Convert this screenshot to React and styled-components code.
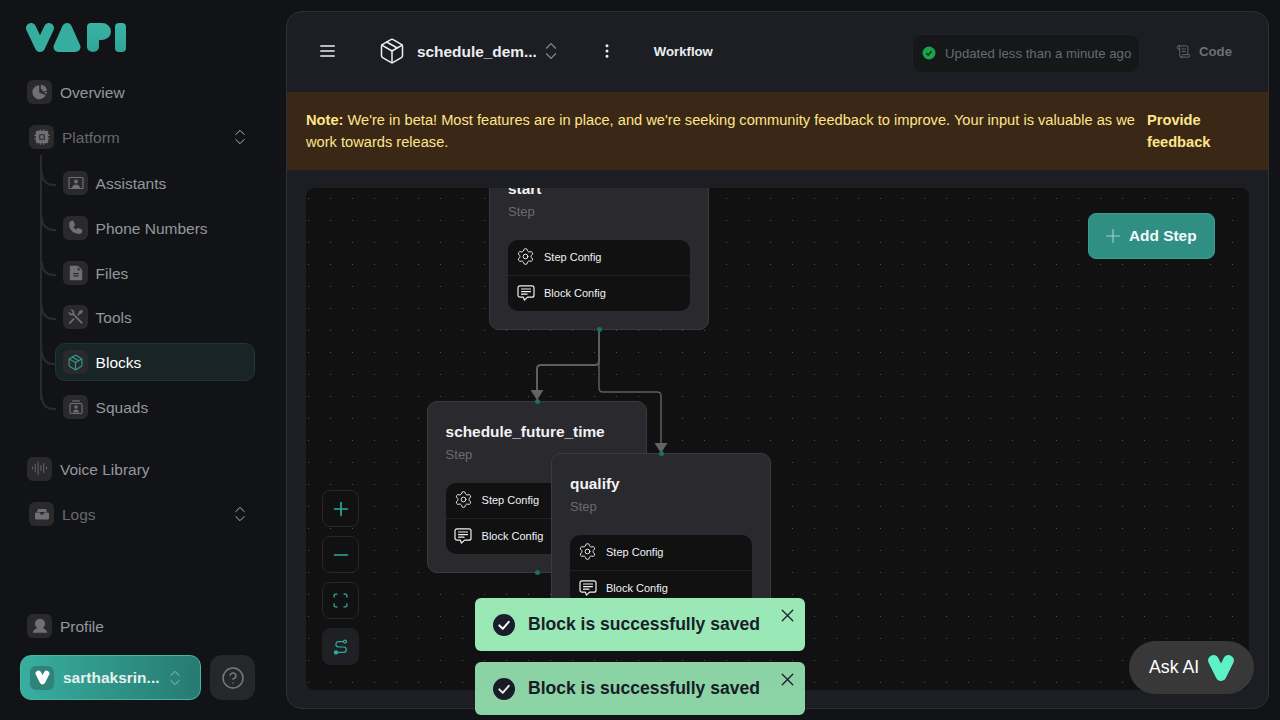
import React from 'react'
import styled, { createGlobalStyle } from 'styled-components'
import {
  AudioLines,
  ChevronsUpDown,
  CircleHelp,
  EllipsisVertical,
  Minus,
  Package,
  Plus,
  Scan,
  ScrollText,
  Settings,
  X,
} from 'lucide-react'
import {
  PiCpuFill,
  PiFileTextFill,
  PiPhoneFill,
  PiUserFill,
} from 'react-icons/pi'
import { RiToolsLine } from 'react-icons/ri'

const GlobalStyle = createGlobalStyle`
  html, body {
    margin: 0;
    height: 100%;
    overflow: hidden;
    background: #121317;
    font-family: "Liberation Sans", Arial, sans-serif;
  }
  * { box-sizing: border-box; }
`

const Page = styled.div`
  display: flex;
  height: 100vh;
`

const Sidebar = styled.aside`
  width: 286px;
  flex: none;
  display: flex;
  flex-direction: column;
  padding: 23px 0 20px;
`

const LogoMark = styled.svg`
  display: block;
  width: 101px;
  height: 30px;
  margin: 0 0 20px 26px;
`

const TopRow = styled.div`
  display: flex;
  align-items: center;
  gap: 8px;
  height: 38px;
  padding-left: ${(p) => (p.$group ? 29 : 27)}px;
  padding-right: 36px;
  margin-bottom: ${(p) => p.$after ?? 7}px;
  font-size: 15.5px;
  line-height: 20px;
  color: ${(p) => (p.$group ? '#67696e' : '#94979d')};
`

const RowLabel = styled.span`
  margin-top: 2px;
`

const IconBox = styled.span`
  width: 25px;
  height: 24px;
  flex: none;
  display: flex;
  align-items: center;
  justify-content: center;
  border-radius: 6px;
  background: #2a2a2c;
  color: ${(p) => (p.$active ? '#2f9c8e' : '#6f7074')};
`

const GroupChevron = styled.span`
  margin-left: auto;
  display: flex;
  color: #c4c4c6;
`

const ChildList = styled.div`
  position: relative;
  display: flex;
  flex-direction: column;
  gap: 6.8px;
  margin: 8px 0 24px;
  &::before {
    content: '';
    position: absolute;
    left: 40px;
    top: -9px;
    height: 245px;
    width: 2px;
    background: #2a2b2f;
  }
`

const ChildRow = styled.div`
  position: relative;
  display: flex;
  align-items: center;
  gap: 7.6px;
  height: 38px;
  width: 200px;
  margin-left: 55px;
  padding-left: 7px;
  border-radius: 10px;
  border: 1px solid ${(p) => (p.$active ? '#1f3835' : 'transparent')};
  background: ${(p) => (p.$active ? '#182425' : 'transparent')};
  font-size: 15.5px;
  line-height: 20px;
  color: ${(p) => (p.$active ? '#ffffff' : '#94979d')};
  &::before {
    content: '';
    position: absolute;
    left: -15px;
    top: 7px;
    width: 13px;
    height: 12px;
    border-left: 2px solid #2a2b2f;
    border-bottom: 2px solid #2a2b2f;
    border-bottom-left-radius: 12px;
  }
`

const SideFooter = styled.div`
  margin-top: auto;
`

const FooterActions = styled.div`
  display: flex;
  gap: 9px;
  padding-left: 20px;
`

const OrgButton = styled.div`
  width: 181px;
  height: 45px;
  display: flex;
  align-items: center;
  padding-left: 9px;
  border-radius: 11px;
  border: 1px solid #45b5a7;
  background: linear-gradient(90deg, #38ae9f, #277a70);
  color: #e4f1ee;
  font-size: 15.5px;
  font-weight: 700;
`

const OrgLogo = styled.span`
  width: 24px;
  height: 24px;
  flex: none;
  margin-right: 9px;
  display: flex;
  align-items: center;
  justify-content: center;
  border-radius: 6px;
  background: #2f8379;
`

const OrgChevron = styled.span`
  margin-left: 5px;
  display: flex;
  color: #8fcdc5;
`

const HelpButton = styled.div`
  width: 45px;
  height: 45px;
  display: flex;
  align-items: center;
  justify-content: center;
  border-radius: 12px;
  background: #262729;
  color: #77787b;
`

const Main = styled.main`
  flex: 1;
  min-width: 0;
  margin: 11px 11px 11px 0;
  display: flex;
  flex-direction: column;
  overflow: hidden;
  border-radius: 16px;
  border: 1px solid #2e3036;
  background: #1c1e23;
`

const Header = styled.header`
  height: 80px;
  flex: none;
  display: flex;
  align-items: center;
  padding: 0 36px 2px 33px;
  color: #eceef1;
`

const Hamburger = styled.svg`
  width: 15px;
  height: 12px;
  flex: none;
  margin-right: 43px;
`

const Title = styled.span`
  margin: 2px 0 0 11px;
  font-size: 15.4px;
  font-weight: 700;
`

const TitleChevron = styled.span`
  display: flex;
  margin-left: 3px;
  color: #8b8d92;
`

const Dots = styled.span`
  display: flex;
  margin-left: 36px;
`

const TabLabel = styled.span`
  margin-left: 38px;
  font-size: 13.2px;
  font-weight: 700;
`

const StatusPill = styled.div`
  margin-left: auto;
  height: 39px;
  width: 228px;
  flex: none;
  display: flex;
  align-items: center;
  gap: 9px;
  padding-left: 9px;
  border-radius: 10px;
  border: 1px solid #1f2125;
  background: #161719;
  font-size: 13.2px;
  color: #676b70;
  position: relative;
  top: 2px;
`

const CodeLink = styled.div`
  margin-left: 36px;
  display: flex;
  align-items: center;
  gap: 8px;
  font-size: 13.2px;
  font-weight: 700;
  color: #6d7075;
`

const Banner = styled.div`
  flex: none;
  display: flex;
  gap: 6px;
  height: 78px;
  padding: 16.6px 20px 0 19px;
  background: #3b2716;
  color: #fde68a;
  font-size: 14.65px;
  line-height: 22.5px;
`

const BannerText = styled.div`
  width: 835px;
  flex: none;
`

const BannerLink = styled.div`
  font-weight: 700;
`

const Canvas = styled.div`
  position: relative;
  flex: 1;
  margin: 18px 19px 18px;
  overflow: hidden;
  border-radius: 8px;
  background-color: #111112;
  background-image: radial-gradient(circle at 0.5px 0.5px, #505154 0.7px, transparent 0.71px);
  background-size: 22px 22px;
  background-position: 2px 10px;
`

const EdgeLayer = styled.svg`
  position: absolute;
  inset: 0;
  width: 100%;
  height: 100%;
`

const Node = styled.div`
  position: absolute;
  left: ${(p) => p.$x}px;
  top: ${(p) => p.$y}px;
  width: 220px;
  height: 172px;
  padding: 21px 18px 0;
  border-radius: 10px;
  border: 1px solid #3b3c41;
  background: #29292e;
  &::before,
  &::after {
    content: '';
    position: absolute;
    left: 107px;
    width: 5px;
    height: 5px;
    border-radius: 50%;
    background: #1f6e66;
  }
  &::before { top: -3px; }
  &::after { bottom: -3px; }
`

const NodeTitle = styled.div`
  font-size: 15.4px;
  font-weight: 700;
  line-height: 18px;
  color: #f2f3f5;
`

const NodeSub = styled.div`
  margin-top: 6px;
  font-size: 13px;
  line-height: 15px;
  color: #696b70;
`

const ConfigBox = styled.div`
  margin-top: 21px;
  border-radius: 10px;
  background: #111112;
  overflow: hidden;
`

const ConfigRow = styled.div`
  height: 35px;
  display: flex;
  align-items: center;
  gap: 9px;
  padding: 0 0 2px 8px;
  font-size: 11px;
  color: #f0f2f5;
  & + & {
    height: 36px;
    border-top: 1px solid #222225;
  }
`

const ConfigIcon = styled.span`
  width: 19px;
  flex: none;
  display: flex;
  justify-content: center;
`

const Controls = styled.div`
  position: absolute;
  left: 16px;
  bottom: 25px;
  display: flex;
  flex-direction: column;
  gap: 9px;
`

const ControlButton = styled.div`
  width: 37px;
  height: 37px;
  display: flex;
  align-items: center;
  justify-content: center;
  border-radius: 8px;
  border: 1px solid ${(p) => (p.$filled ? '#1e2024' : '#25272a')};
  background: ${(p) => (p.$filled ? '#1e2024' : '#111112')};
  color: #30ab9a;
`

const AddStep = styled.div`
  position: absolute;
  right: 34px;
  top: 25px;
  width: 127px;
  height: 46px;
  display: flex;
  align-items: center;
  gap: 5px;
  padding-left: 13px;
  border-radius: 8px;
  border: 1px solid #3a9e92;
  background: #308f83;
  color: #f4fbfa;
  font-size: 15.4px;
  font-weight: 700;
`

const AddIcon = styled.span`
  display: flex;
  color: #a6d4ce;
`

const ToastStack = styled.div`
  position: fixed;
  left: 475px;
  top: 598px;
  display: flex;
  flex-direction: column;
  gap: 11px;
`

const Toast = styled.div`
  position: relative;
  width: 330px;
  height: 53px;
  display: flex;
  align-items: center;
  gap: 13px;
  padding-left: 18px;
  border-radius: 6px;
  background: #9ae8b5;
  opacity: ${(p) => (p.$faded ? 0.9 : 1)};
  color: #1a1d2a;
  font-size: 17.55px;
  font-weight: 700;
`

const ToastClose = styled.span`
  position: absolute;
  right: 7px;
  top: 7px;
  display: flex;
`

const AskAi = styled.div`
  position: fixed;
  left: 1129px;
  top: 641px;
  width: 125px;
  height: 53px;
  display: flex;
  align-items: center;
  gap: 8px;
  padding-left: 20px;
  border-radius: 27px;
  background: #383838;
  color: #ffffff;
  font-size: 17.7px;
`

const VapiLogo = () => (
  <LogoMark viewBox="26 23 101 30">
    <defs>
      <linearGradient id="logoFill" x1="0" y1="0" x2="0" y2="1">
        <stop offset="0" stopColor="#3ab3a4" />
        <stop offset="1" stopColor="#30a596" />
      </linearGradient>
    </defs>
    <path d="M31 28 L40 47 L49 28" fill="none" stroke="#36ad9e" strokeWidth="10" strokeLinecap="round" strokeLinejoin="round" />
    <path d="M67 28 L58.5 47 H75.5 Z" fill="#36ad9e" stroke="#36ad9e" strokeWidth="10" strokeLinejoin="round" />
    <path d="M91 23 H102 A9 8.5 0 0 1 102 40 H99 V47 A6 5 0 0 1 87 47 V27 A4 4 0 0 1 91 23 Z" fill="url(#logoFill)" />
    <rect x="115" y="23" width="11" height="29" rx="4" fill="url(#logoFill)" />
  </LogoMark>
)

const PieIcon = () => (
  <svg width="16" height="16" viewBox="0 0 16 16" fill="currentColor">
    <path d="M7.2 1.2 V8.6 L13.7 11.2 A7 7 0 1 1 7.2 1.2 Z" />
    <path d="M8.8 0.8 A7 7 0 0 1 15 7 L11 7.6 L8.8 4.6 Z" />
    <path d="M11.4 8.4 L15.2 8 A7 7 0 0 1 14.4 10 Z" />
  </svg>
)

const AssistantIcon = () => (
  <svg width="16" height="16" viewBox="0 0 16 16" fill="none">
    <rect x="1" y="2.5" width="14" height="11" rx="1" stroke="currentColor" strokeWidth="1.2" />
    <circle cx="8" cy="6.6" r="2" fill="currentColor" />
    <path d="M4 13 C4.5 10.4 6 9.5 8 9.5 C10 9.5 11.5 10.4 12 13 Z" fill="currentColor" />
  </svg>
)

const SquadIcon = () => (
  <svg width="16" height="16" viewBox="0 0 16 16" fill="none">
    <path d="M4 2 H12" stroke="currentColor" strokeWidth="1.2" />
    <rect x="2" y="4.5" width="12" height="10" rx="1.2" stroke="currentColor" strokeWidth="1.2" />
    <circle cx="8" cy="8" r="1.7" fill="currentColor" />
    <path d="M5 13.5 C5.3 11.4 6.4 10.6 8 10.6 C9.6 10.6 10.7 11.4 11 13.5 Z" fill="currentColor" />
  </svg>
)

const TrayIcon = () => (
  <svg width="16" height="16" viewBox="0 0 16 16" fill="currentColor">
    <path d="M4 3 H12 L13 6 H3 Z" />
    <path d="M1 8 C1 7 2 6.6 3 6.6 H6 L6.6 8.4 H9.4 L10 6.6 H13 C14 6.6 15 7 15 8 V12 C15 13 14.2 13.5 13.4 13.5 H2.6 C1.8 13.5 1 13 1 12 Z" />
  </svg>
)

const ChatIcon = () => (
  <svg width="18" height="18" viewBox="0 0 18 18" fill="none" stroke="currentColor" strokeWidth="1.2" strokeLinejoin="round" strokeLinecap="round">
    <path d="M3 1.8 H15 A2 2 0 0 1 17 3.8 V11.2 A2 2 0 0 1 15 13.2 H10.5 L7.5 16.2 L6.4 13.2 H3 A2 2 0 0 1 1 11.2 V3.8 A2 2 0 0 1 3 1.8 Z" />
    <path d="M4.5 5 H13.5 M4.5 7.6 H13.5 M4.5 10.2 H10" />
  </svg>
)

const RouteIcon = () => (
  <svg width="16" height="16" viewBox="0 0 16 16" fill="none" stroke="currentColor" strokeWidth="1.2">
    <circle cx="12" cy="2.6" r="1.5" />
    <path d="M10.5 2.6 H5.6 A2.7 2.7 0 0 0 5.6 8 H10.6 A2.7 2.7 0 0 1 10.6 13.4 H4" />
    <circle cx="3" cy="13.4" r="1.6" fill="currentColor" />
  </svg>
)

const HeartV = ({ size, color }) => (
  <svg width={size} height={size} viewBox="0 0 26 26">
    <path d="M6 6 L13 20 L20 6" fill="none" stroke={color} strokeWidth="10" strokeLinecap="round" strokeLinejoin="round" />
  </svg>
)

const StatusDot = () => (
  <svg width="14" height="14" viewBox="0 0 14 14" fill="none">
    <circle cx="7" cy="7" r="6.5" fill="#16a34a" />
    <path d="M4.4 7.2 L6.2 9 L9.6 5.2" stroke="#0f1f17" strokeWidth="1.3" />
  </svg>
)

const ToastCheck = () => (
  <svg width="22" height="22" viewBox="0 0 22 22" fill="none">
    <circle cx="11" cy="11" r="11" fill="#1a1d2a" />
    <path d="M6.3 11.4 L9.7 14.8 L15.8 7.8" stroke="#ffffff" strokeWidth="2" strokeLinecap="round" strokeLinejoin="round" />
  </svg>
)

const childItems = [
  { label: 'Assistants', icon: <AssistantIcon /> },
  { label: 'Phone Numbers', icon: <PiPhoneFill size={17} /> },
  { label: 'Files', icon: <PiFileTextFill size={18} /> },
  { label: 'Tools', icon: <RiToolsLine size={20} /> },
  { label: 'Blocks', icon: <Package size={17} strokeWidth={1.6} />, active: true },
  { label: 'Squads', icon: <SquadIcon /> },
]

const nodes = [
  { name: 'start', x: 183, y: -30 },
  { name: 'schedule_future_time', x: 120.6, y: 213 },
  { name: 'qualify', x: 245, y: 265 },
]

const App = () => {
  return (
    <Page>
      <GlobalStyle />
      <Sidebar>
        <VapiLogo />
        <TopRow>
          <IconBox><PieIcon /></IconBox>
          <RowLabel>Overview</RowLabel>
        </TopRow>
        <TopRow $group $after={0}>
          <IconBox><PiCpuFill size={18} /></IconBox>
          <RowLabel>Platform</RowLabel>
          <GroupChevron><ChevronsUpDown size={20} strokeWidth={1.1} /></GroupChevron>
        </TopRow>
        <ChildList>
          {childItems.map((item) => (
            <ChildRow key={item.label} $active={item.active}>
              <IconBox $active={item.active}>{item.icon}</IconBox>
              <RowLabel>{item.label}</RowLabel>
            </ChildRow>
          ))}
        </ChildList>
        <TopRow>
          <IconBox><AudioLines size={17} strokeWidth={1.2} /></IconBox>
          <RowLabel>Voice Library</RowLabel>
        </TopRow>
        <TopRow $group>
          <IconBox><TrayIcon /></IconBox>
          <RowLabel>Logs</RowLabel>
          <GroupChevron><ChevronsUpDown size={20} strokeWidth={1.1} /></GroupChevron>
        </TopRow>
        <SideFooter>
          <TopRow $after={10}>
            <IconBox><PiUserFill size={18} /></IconBox>
            <RowLabel>Profile</RowLabel>
          </TopRow>
          <FooterActions>
            <OrgButton>
              <OrgLogo><HeartV size={15} color="#ffffff" /></OrgLogo>
              sarthaksrin...
              <OrgChevron><ChevronsUpDown size={20} strokeWidth={1.1} /></OrgChevron>
            </OrgButton>
            <HelpButton><CircleHelp size={24} strokeWidth={1.5} /></HelpButton>
          </FooterActions>
        </SideFooter>
      </Sidebar>

      <Main>
        <Header>
          <Hamburger viewBox="0 0 15 12" fill="none" stroke="currentColor" strokeWidth="1.5" strokeLinecap="round">
            <path d="M0.8 1 H14.2 M0.8 6 H14.2 M0.8 11 H14.2" />
          </Hamburger>
          <Package size={28} strokeWidth={1.3} />
          <Title>schedule_dem...</Title>
          <TitleChevron><ChevronsUpDown size={22} strokeWidth={1.2} /></TitleChevron>
          <Dots><EllipsisVertical size={18} /></Dots>
          <TabLabel>Workflow</TabLabel>
          <StatusPill>
            <StatusDot />
            Updated less than a minute ago
          </StatusPill>
          <CodeLink>
            <ScrollText size={15} strokeWidth={1.4} />
            Code
          </CodeLink>
        </Header>

        <Banner>
          <BannerText>
            <strong>Note:</strong> We're in beta! Most features are in place, and we're seeking community feedback to improve. Your input is valuable as we work towards release.
          </BannerText>
          <BannerLink>Provide feedback</BannerLink>
        </Banner>

        <Canvas>
          <EdgeLayer>
            <g fill="none" stroke="#5c5e62">
              <path d="M293 143 V173 Q293 177 289 177 H235 Q231 177 231 181 V204" strokeWidth="2" />
              <path d="M293 143 V200 Q293 204 297 204 H351 Q355 204 355 208 V256" strokeWidth="1.5" />
            </g>
            <path d="M224.5 202 H237.5 L231 212 Z" fill="#636468" />
            <path d="M348.5 255 H361.5 L355 265 Z" fill="#636468" />
          </EdgeLayer>

          {nodes.map((node) => (
            <Node key={node.name} $x={node.x} $y={node.y}>
              <NodeTitle>{node.name}</NodeTitle>
              <NodeSub>Step</NodeSub>
              <ConfigBox>
                <ConfigRow>
                  <ConfigIcon><Settings size={21} strokeWidth={1.2} /></ConfigIcon>
                  Step Config
                </ConfigRow>
                <ConfigRow>
                  <ConfigIcon><ChatIcon /></ConfigIcon>
                  Block Config
                </ConfigRow>
              </ConfigBox>
            </Node>
          ))}

          <Controls>
            <ControlButton><Plus size={22} strokeWidth={1.8} /></ControlButton>
            <ControlButton><Minus size={22} strokeWidth={1.8} /></ControlButton>
            <ControlButton><Scan size={17} strokeWidth={1.9} /></ControlButton>
            <ControlButton $filled><RouteIcon /></ControlButton>
          </Controls>

          <AddStep>
            <AddIcon><Plus size={22} strokeWidth={1.2} /></AddIcon>
            Add Step
          </AddStep>
        </Canvas>
      </Main>

      <ToastStack>
        <Toast>
          <ToastCheck />
          Block is successfully saved
          <ToastClose><X size={21} strokeWidth={1.5} /></ToastClose>
        </Toast>
        <Toast $faded>
          <ToastCheck />
          Block is successfully saved
          <ToastClose><X size={21} strokeWidth={1.5} /></ToastClose>
        </Toast>
      </ToastStack>

      <AskAi>
        Ask AI
        <HeartV size={28} color="#5df2c6" />
      </AskAi>
    </Page>
  )
}

export default App
